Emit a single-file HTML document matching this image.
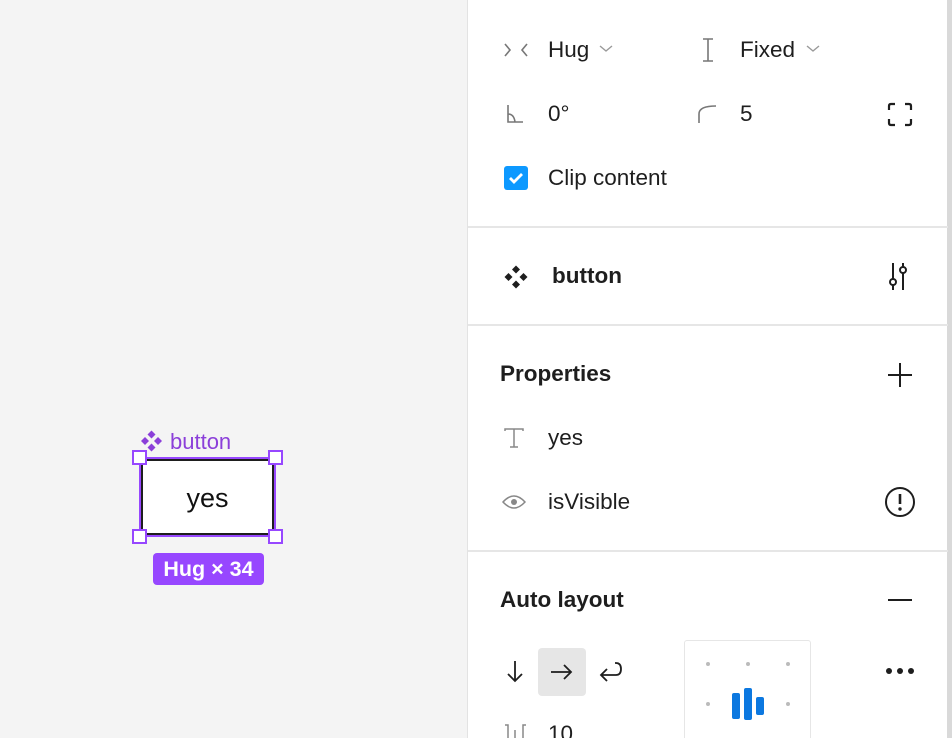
<!DOCTYPE html>
<html><head><style>
*{margin:0;padding:0;box-sizing:border-box}
html,body{width:952px;height:738px;overflow:hidden}
body{background:#f4f4f4;font-family:"Liberation Sans",sans-serif;position:relative;color:#1e1e1e}
.a{position:absolute}
.t{font-size:22.5px;line-height:26px}
.b{font-weight:bold}
.panel{left:467px;top:0;width:485px;height:738px;background:#fff;border-left:1px solid #e3e3e3}
.hr{left:468px;width:480px;height:2px;background:#e6e6e6}
</style></head><body>
<div class="a panel"></div>
<div class="a" style="left:947px;top:0;width:5px;height:738px;background:#d9d9d9"></div>
<div class="a hr" style="top:226px"></div>
<div class="a hr" style="top:324px"></div>
<div class="a hr" style="top:550px"></div>

<svg class="a" style="left:503px;top:40px" width="26" height="20" viewBox="0 0 26 20"><path d="M2 4l5 6-5 6M24 4l-5 6 5 6" fill="none" stroke="#777" stroke-width="1.6"/></svg>
<div class="a t" style="left:548px;top:37px">Hug</div>
<svg class="a" style="left:599px;top:44px" width="14" height="10"><path d="M1 2l6 5 6-5" fill="none" stroke="#999" stroke-width="1.4"/></svg>
<svg class="a" style="left:700px;top:38px" width="16" height="24"><path d="M3 1h10M3 23h10M8 1v22" stroke="#777" stroke-width="1.6" fill="none"/></svg>
<div class="a t" style="left:740px;top:37px">Fixed</div>
<svg class="a" style="left:806px;top:44px" width="14" height="10"><path d="M1 2l6 5 6-5" fill="none" stroke="#999" stroke-width="1.4"/></svg>

<svg class="a" style="left:506px;top:104px" width="18" height="20"><path d="M2 1v17h15M2 10q6 0 7 8" fill="none" stroke="#777" stroke-width="1.6"/></svg>
<div class="a t" style="left:548px;top:101px">0°</div>
<svg class="a" style="left:697px;top:104px" width="22" height="20"><path d="M2 19v-9q0-8 17-8" fill="none" stroke="#777" stroke-width="1.6"/></svg>
<div class="a t" style="left:740px;top:101px">5</div>
<svg class="a" style="left:887px;top:102px" width="26" height="25"><path d="M2 8V4q0-2 2-2h4M18 2h4q2 0 2 2v4M24 17v4q0 2-2 2h-4M8 23H4q-2 0-2-2v-4" fill="none" stroke="#1e1e1e" stroke-width="2.2"/></svg>

<div class="a" style="left:504px;top:166px;width:24px;height:24px;background:#0d99ff;border-radius:3px"></div>
<svg class="a" style="left:504px;top:166px" width="24" height="24"><path d="M6 12l4 4 8-8" fill="none" stroke="#fff" stroke-width="2.8"/></svg>
<div class="a t" style="left:548px;top:165px">Clip content</div>

<svg class="a" style="left:504px;top:265px" width="24" height="24"><g fill="#1e1e1e"><path d="M12 0.5l4 4-4 4-4-4z"/><path d="M12 15.5l4 4-4 4-4-4z"/><path d="M4.5 8l4 4-4 4-4-4z"/><path d="M19.5 8l4 4-4 4-4-4z"/></g></svg>
<div class="a t b" style="left:552px;top:263px">button</div>
<svg class="a" style="left:886px;top:261px" width="28" height="30"><g fill="none" stroke="#1e1e1e" stroke-width="2"><path d="M7 2v16M7 24v5M17 2v4M17 12v17"/><circle cx="7" cy="21" r="3"/><circle cx="17" cy="9" r="3"/></g></svg>

<div class="a t b" style="left:500px;top:361px">Properties</div>
<svg class="a" style="left:887px;top:362px" width="26" height="26"><path d="M13 1v24M1 13h24" stroke="#1e1e1e" stroke-width="2"/></svg>
<svg class="a" style="left:503px;top:427px" width="22" height="22"><path d="M2 4V2h18v2M11 2v18M7 20h8" fill="none" stroke="#888" stroke-width="1.5"/></svg>
<div class="a t" style="left:548px;top:425px">yes</div>
<svg class="a" style="left:502px;top:493px" width="24" height="18"><path d="M1 9q11-12 22 0q-11 12-22 0z" fill="none" stroke="#888" stroke-width="1.5"/><circle cx="12" cy="9" r="3" fill="#888"/></svg>
<div class="a t" style="left:548px;top:489px">isVisible</div>
<svg class="a" style="left:884px;top:486px" width="32" height="32"><circle cx="16" cy="16" r="14" fill="none" stroke="#1e1e1e" stroke-width="2"/><path d="M16 8v10" stroke="#1e1e1e" stroke-width="2.6"/><circle cx="16" cy="23" r="1.7" fill="#1e1e1e"/></svg>

<div class="a t b" style="left:500px;top:587px">Auto layout</div>
<div class="a" style="left:888px;top:599px;width:24px;height:2px;background:#1e1e1e"></div>
<svg class="a" style="left:505px;top:660px" width="20" height="24"><path d="M10 1v20M3 14l7 7 7-7" fill="none" stroke="#1e1e1e" stroke-width="1.8"/></svg>
<div class="a" style="left:538px;top:648px;width:48px;height:48px;background:#e6e6e6;border-radius:4px"></div>
<svg class="a" style="left:549px;top:660px" width="26" height="24"><path d="M2 12h20M15 5l7 7-7 7" fill="none" stroke="#1e1e1e" stroke-width="1.8"/></svg>
<svg class="a" style="left:597px;top:660px" width="28" height="24"><path d="M18 3h1q5 0 5 6t-5 6H4M10 9l-6 6 6 6" fill="none" stroke="#1e1e1e" stroke-width="1.8"/></svg>
<div class="a" style="left:684px;top:640px;width:127px;height:110px;border:1px solid #e6e6e6;border-radius:3px;background:#fff"></div>
<svg class="a" style="left:684px;top:640px" width="127" height="98"><g fill="#bbb"><circle cx="24" cy="24" r="2"/><circle cx="64" cy="24" r="2"/><circle cx="104" cy="24" r="2"/><circle cx="24" cy="64" r="2"/><circle cx="104" cy="64" r="2"/></g><g fill="#0c78e0"><rect x="48" y="53" width="8" height="26" rx="2"/><rect x="60" y="48" width="8" height="32" rx="2"/><rect x="72" y="57" width="8" height="18" rx="2"/></g></svg>
<svg class="a" style="left:884px;top:664px" width="32" height="14"><g fill="#1e1e1e"><circle cx="5" cy="7" r="3"/><circle cx="16" cy="7" r="3"/><circle cx="27" cy="7" r="3"/></g></svg>
<svg class="a" style="left:502px;top:722px" width="28" height="16"><path d="M3 3h3v13M13 8v8M24 3h-3v13" fill="none" stroke="#888" stroke-width="1.5"/></svg>
<div class="a t" style="left:548px;top:721px">10</div>

<!-- canvas -->
<svg class="a" style="left:140px;top:430px" width="23" height="22"><g fill="#8b3fd9"><path d="M11.5 0.5l4 4-4 4-4-4z"/><path d="M11.5 13.5l4 4-4 4-4-4z"/><path d="M5 7l4 4-4 4-4-4z"/><path d="M18 7l4 4-4 4-4-4z"/></g></svg>
<div class="a" style="left:170px;top:429px;font-size:22px;line-height:26px;color:#8b3fd9">button</div>
<div class="a" style="left:139px;top:457px;width:137px;height:80px;border:2px solid #9747ff;background:#fff"></div>
<div class="a" style="left:141px;top:459px;width:133px;height:76px;border:2px solid #1e1e1e;border-radius:5px;background:#fff"></div>
<div class="a" style="left:140px;top:482px;width:135px;text-align:center;font-size:27px;line-height:32px;color:#111">yes</div>
<div class="a" style="left:132px;top:450px;width:15px;height:15px;border:2px solid #9747ff;background:#fff"></div>
<div class="a" style="left:268px;top:450px;width:15px;height:15px;border:2px solid #9747ff;background:#fff"></div>
<div class="a" style="left:132px;top:529px;width:15px;height:15px;border:2px solid #9747ff;background:#fff"></div>
<div class="a" style="left:268px;top:529px;width:15px;height:15px;border:2px solid #9747ff;background:#fff"></div>
<div class="a b" style="left:153px;top:553px;width:111px;height:32px;background:#9747ff;border-radius:4px;color:#fff;font-size:21.5px;line-height:32px;text-align:center">Hug × 34</div>
</body></html>
